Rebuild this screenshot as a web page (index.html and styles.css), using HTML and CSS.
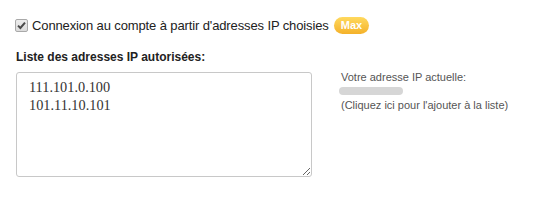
FILE: index.html
```html
<!DOCTYPE html>
<html lang="fr">
<head>
<meta charset="utf-8">
<link rel="stylesheet" href="styles.css">
</head>
<body>
<div class="panel">
  <label class="check-row">
    <span class="check-box">
      <svg width="9" height="9" viewBox="0 0 9 9"><path d="M1 4.6 L3.4 7 L8 1.6" fill="none" stroke="#4a4a4a" stroke-width="2"/></svg>
    </span>
    <span class="check-label">Connexion au compte à partir d'adresses IP choisies</span>
    <span class="badge">Max</span>
  </label>
  <div class="list-title">Liste des adresses IP autorisées:</div>
  <div class="list-row">
    <textarea class="ip-list">111.101.0.100
101.11.10.101</textarea>
    <div class="current">
      <div class="current-title">Votre adresse IP actuelle:</div>
      <div class="current-ip"></div>
      <a class="current-add">(Cliquez ici pour l'ajouter à la liste)</a>
    </div>
  </div>
</div>
</body>
</html>
```
FILE: styles.css
```css
html, body {
  margin: 0;
  padding: 0;
  background: #ffffff;
}
body {
  font-family: "Liberation Sans", Arial, sans-serif;
  color: #222;
}
.panel {
  padding: 13px 16px 0 15px;
}
.check-row {
  display: flex;
  align-items: center;
  height: 24px;
}
.check-box {
  box-sizing: border-box;
  width: 13px;
  height: 13px;
  margin: 0 4px 0 0;
  border: 1px solid #a9a9a9;
  border-radius: 2px;
  background: linear-gradient(#ececec, #dcdcdc);
  display: flex;
  align-items: center;
  justify-content: center;
}
.check-box svg {
  display: block;
}
.check-label {
  font-size: 13px;
  letter-spacing: -0.12px;
  color: #222;
}
.badge {
  margin-left: 5px;
  height: 17px;
  padding: 0 7px;
  border-radius: 9px;
  background: linear-gradient(#ffd95e, #f4b12a);
  color: #fff;
  font-size: 11px;
  font-weight: bold;
  line-height: 17px;
}
.list-title {
  margin: 12px 0 0 1px;
  font-size: 12px;
  font-weight: bold;
  color: #222;
  line-height: 16px;
}
.list-row {
  display: flex;
  margin: 7px 0 0 1px;
  gap: 29px;
}
.ip-list {
  box-sizing: border-box;
  width: 296px;
  height: 105px;
  margin: 0;
  border: 1px solid #c8c8c8;
  border-radius: 3px;
  padding: 5px 12px;
  font-family: "Liberation Serif", "Times New Roman", serif;
  font-size: 14.3px;
  line-height: 18px;
  color: #333;
  resize: both;
}
.current {
  margin-top: -2px;
  font-size: 11px;
  color: #555;
  line-height: 14px;
}
.current-ip {
  width: 64px;
  height: 8px;
  margin: 3px 0 3px -2px;
  background: #d6d6d6;
  border-radius: 4px;
  filter: blur(0.6px);
}
.current-add {
  display: block;
  color: #555;
  cursor: pointer;
}
```
